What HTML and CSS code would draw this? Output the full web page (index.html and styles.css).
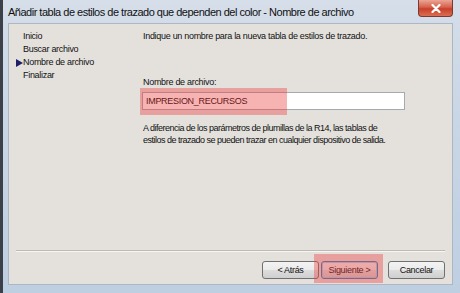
FILE: index.html
```html
<!DOCTYPE html>
<html lang="es">
<head>
    <meta charset="UTF-8">
    <title>Nombre de archivo</title>
    <link rel="stylesheet" href="styles.css">
</head>
<body>
    <div class="window">
        <div class="titlebar">
            <span class="title">Añadir tabla de estilos de trazado que dependen del color - Nombre de archivo</span>
            <button class="close-btn">
                <svg width="10" height="9" viewBox="0 0 10 9"><path d="M1.5 1 L8.5 8 M8.5 1 L1.5 8" stroke="#fff" stroke-width="2.2" stroke-linecap="round"/></svg>
            </button>
        </div>
        <div class="client">
            <div class="main">
                <ul class="steps">
                    <li>Inicio</li>
                    <li>Buscar archivo</li>
                    <li class="current">Nombre de archivo</li>
                    <li>Finalizar</li>
                </ul>
                <div class="content">
                    <p class="intro">Indique un nombre para la nueva tabla de estilos de trazado.</p>
                    <label for="fname">Nombre de archivo:</label>
                    <input type="text" id="fname" value="IMPRESION_RECURSOS">
                    <p class="note">A diferencia de los parámetros de plumillas de la R14, las tablas de<br>estilos de trazado se pueden trazar en cualquier dispositivo de salida.</p>
                </div>
            </div>
            <div class="separator"></div>
            <div class="buttons">
                <button class="btn">&lt; Atrás</button>
                <button class="btn btn-next">Siguiente &gt;</button>
                <button class="btn btn-cancel">Cancelar</button>
            </div>
        </div>
        <!-- red marks drawn over the screenshot -->
        <div class="mark mark-input"></div>
        <div class="mark mark-next"></div>
    </div>
</body>
</html>
```

FILE: styles.css
```css
body {
    margin: 0;
    background: #2e333b;
    font-family: 'Liberation Sans', Arial, sans-serif;
}

.window {
    position: relative;
    width: 460px;
    height: 293px;
    box-sizing: border-box;
    padding: 0 7px 8px 5px;
    border-left: 3px solid #3c4049;
    background: linear-gradient(to bottom, #d5dee9 0%, #c9d6e5 40%, #bfcfe2 100%);
    display: flex;
    flex-direction: column;
    overflow: hidden;
}

.titlebar {
    height: 23px;
    display: flex;
    justify-content: space-between;
    align-items: flex-start;
}

.title {
    margin-top: 6px;
    font-size: 11px;
    letter-spacing: -0.5px;
    color: #111;
    white-space: nowrap;
}

.close-btn {
    width: 35px;
    height: 17px;
    padding: 0;
    border: 1px solid #7a3a33;
    border-top: none;
    border-radius: 0 0 4px 4px;
    background: linear-gradient(to bottom, #eaa595 0%, #d8604b 45%, #c7402a 55%, #dc6e52 100%);
    display: flex;
    align-items: center;
    justify-content: center;
}

.client {
    flex: 1;
    background: #e4e1dd;
    border: 1px solid #aeb6c1;
    display: flex;
    flex-direction: column;
    font-size: 9px;
    letter-spacing: -0.3px;
    color: #111;
}

.main {
    flex: 1;
    display: flex;
}

.steps {
    list-style: none;
    margin: 0;
    padding: 6px 0 0 14px;
    width: 120px;
    line-height: 13px;
}

.steps li {
    position: relative;
}

.steps li.current::before {
    content: "";
    position: absolute;
    left: -7px;
    top: 3px;
    border-left: 7px solid #1e1f6a;
    border-top: 4px solid transparent;
    border-bottom: 4px solid transparent;
}

.content {
    padding-top: 6px;
    display: flex;
    flex-direction: column;
    align-items: flex-start;
}

.intro {
    margin: 0;
    line-height: 13px;
}

label {
    margin-top: 33px;
    line-height: 13px;
}

input {
    margin: 3px 0 0 -1px;
    width: 263px;
    height: 18px;
    box-sizing: border-box;
    border: 1px solid #a5a9b0;
    background: #fff;
    padding: 0 3px;
    font-family: inherit;
    font-size: 9px;
    letter-spacing: -0.3px;
    color: #000;
}

.note {
    margin: 12px 0 0;
    line-height: 12px;
    letter-spacing: -0.5px;
}

.separator {
    margin: 0 7px 0 7px;
    border-top: 1px solid #bdb9b3;
    border-bottom: 1px solid #f7f6f4;
}

.buttons {
    display: flex;
    justify-content: flex-end;
    gap: 2px;
    padding: 9px 7px 5px 0;
}

.btn {
    width: 57px;
    height: 18px;
    padding: 0;
    border: 1px solid #707070;
    border-radius: 3px;
    background: linear-gradient(to bottom, #f3f3f3 0%, #ebebeb 48%, #dddddd 52%, #cfcfcf 100%);
    font-family: inherit;
    font-size: 9px;
    letter-spacing: -0.3px;
    color: #111;
}

.btn-next {
    border-color: #3c7fb1;
    box-shadow: inset 0 0 0 1px #9ad1f0;
}

.btn-cancel {
    margin-left: 8px;
}

.mark {
    position: absolute;
    background: rgba(236, 62, 62, 0.4);
}

.mark-input {
    left: 137px;
    top: 88px;
    width: 147px;
    height: 27px;
}

.mark-next {
    left: 311px;
    top: 254px;
    width: 69px;
    height: 29px;
}
```
